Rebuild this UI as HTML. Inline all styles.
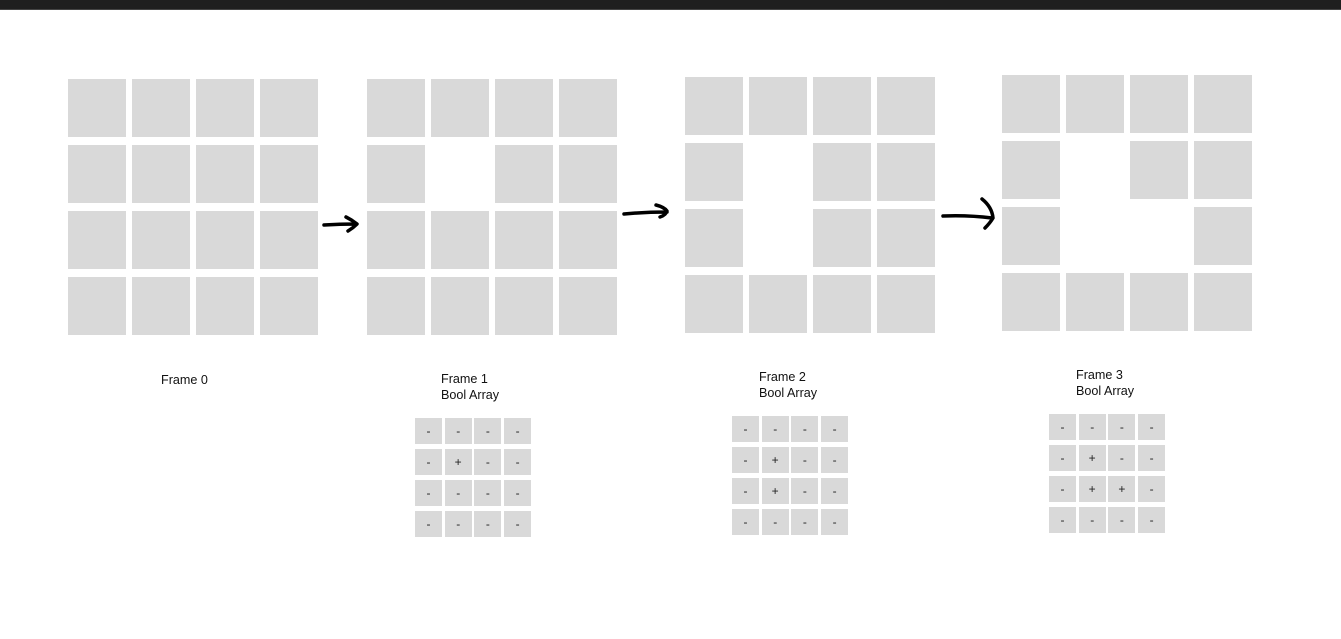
<!DOCTYPE html>
<html><head><meta charset="utf-8"><style>
*{margin:0;padding:0;box-sizing:border-box}
body{width:1341px;height:639px;background:#fff;position:relative;overflow:hidden;font-family:"Liberation Sans",sans-serif}
.bar{position:absolute;left:0;top:0;width:1341px;height:10px;background:#1f1f1f;border-bottom:1px solid #444}
.g{position:absolute;display:grid;grid-template-columns:repeat(4,58px);grid-template-rows:repeat(4,58px);column-gap:6px;row-gap:8px}
.g div{background:#d9d9d9}
.g .e{background:transparent}
.s{position:absolute;display:grid;grid-template-columns:repeat(4,27px);grid-template-rows:repeat(4,26px);column-gap:2.7px;row-gap:5px}
.s div{background:#d9d9d9;font-size:12px;color:#222;display:flex;align-items:center;justify-content:center}
.t{position:absolute;font-size:12.6px;line-height:16px;color:#111}
</style></head><body>
<div class="bar"></div>

<div class="g" style="left:68px;top:79px">
<div></div><div></div><div></div><div></div>
<div></div><div></div><div></div><div></div>
<div></div><div></div><div></div><div></div>
<div></div><div></div><div></div><div></div>
</div>
<div class="g" style="left:367px;top:79px">
<div></div><div></div><div></div><div></div>
<div></div><div class="e"></div><div></div><div></div>
<div></div><div></div><div></div><div></div>
<div></div><div></div><div></div><div></div>
</div>
<div class="g" style="left:685px;top:77px">
<div></div><div></div><div></div><div></div>
<div></div><div class="e"></div><div></div><div></div>
<div></div><div class="e"></div><div></div><div></div>
<div></div><div></div><div></div><div></div>
</div>
<div class="g" style="left:1002px;top:75px">
<div></div><div></div><div></div><div></div>
<div></div><div class="e"></div><div></div><div></div>
<div></div><div class="e"></div><div class="e"></div><div></div>
<div></div><div></div><div></div><div></div>
</div>

<svg width="1341" height="639" style="position:absolute;left:0;top:0" fill="none" stroke="#000" stroke-width="3.5" stroke-linecap="round" stroke-linejoin="round">
<path d="M324 225 Q340 224 356 224 M346 217 Q352 220 357 224 Q353 228 348 231"/>
<path d="M624 214 Q645 212 667 212 M656 205 Q664 207 667 211 Q666 215 660 217"/>
<path d="M943 216 Q968 215 992 218 M982 199 Q992 207 993 218 Q990 223 985 228"/>
</svg>

<div class="t" style="left:161px;top:372px">Frame 0</div>
<div class="t" style="left:441px;top:371px">Frame 1<br>Bool Array</div>
<div class="t" style="left:759px;top:369px">Frame 2<br>Bool Array</div>
<div class="t" style="left:1076px;top:367px">Frame 3<br>Bool Array</div>

<div class="s" style="left:415px;top:418px">
<div>-</div><div>-</div><div>-</div><div>-</div>
<div>-</div><div>+</div><div>-</div><div>-</div>
<div>-</div><div>-</div><div>-</div><div>-</div>
<div>-</div><div>-</div><div>-</div><div>-</div>
</div>
<div class="s" style="left:732px;top:416px">
<div>-</div><div>-</div><div>-</div><div>-</div>
<div>-</div><div>+</div><div>-</div><div>-</div>
<div>-</div><div>+</div><div>-</div><div>-</div>
<div>-</div><div>-</div><div>-</div><div>-</div>
</div>
<div class="s" style="left:1049px;top:414px">
<div>-</div><div>-</div><div>-</div><div>-</div>
<div>-</div><div>+</div><div>-</div><div>-</div>
<div>-</div><div>+</div><div>+</div><div>-</div>
<div>-</div><div>-</div><div>-</div><div>-</div>
</div>
</body></html>
